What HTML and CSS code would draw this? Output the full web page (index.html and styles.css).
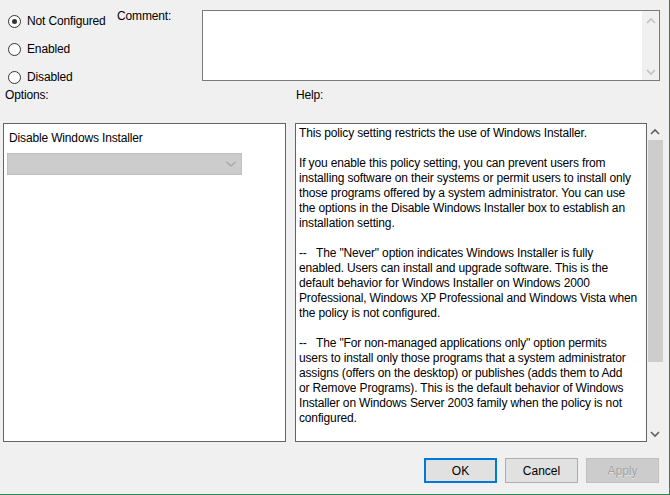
FILE: index.html
```html
<!DOCTYPE html>
<html>
<head>
<meta charset="utf-8">
<link rel="stylesheet" href="styles.css">
</head>
<body>
<div class="dialog">
  <div class="top">
    <div class="radios">
      <label class="radio"><span class="dot checked"></span>Not Configured</label>
      <label class="radio"><span class="dot"></span>Enabled</label>
      <label class="radio"><span class="dot"></span>Disabled</label>
    </div>
    <div class="comment-label">Comment:</div>
    <div class="comment-box">
      <div class="cscroll">
        <svg width="12" height="8" viewBox="0 0 12 8"><path d="M2 6 L6 2 L10 6" fill="none" stroke="#c2c2c2" stroke-width="1.6"/></svg>
        <svg width="12" height="8" viewBox="0 0 12 8"><path d="M2 2 L6 6 L10 2" fill="none" stroke="#c2c2c2" stroke-width="1.6"/></svg>
      </div>
    </div>
  </div>
  <div class="labels">
    <div class="lbl-options">Options:</div>
    <div class="lbl-help">Help:</div>
  </div>
  <div class="panels">
    <div class="options">
      <div class="opt-title">Disable Windows Installer</div>
      <div class="select">
        <svg width="12" height="8" viewBox="0 0 12 8"><path d="M1.5 2 L6 6 L10.5 2" fill="none" stroke="#a6a6a6" stroke-width="1.2"/></svg>
      </div>
    </div>
    <div class="help">
<div class="help-text">This policy setting restricts the use of Windows Installer.

If you enable this policy setting, you can prevent users from
installing software on their systems or permit users to install only
those programs offered by a system administrator. You can use
the options in the Disable Windows Installer box to establish an
installation setting.

--   The "Never" option indicates Windows Installer is fully
enabled. Users can install and upgrade software. This is the
default behavior for Windows Installer on Windows 2000
Professional, Windows XP Professional and Windows Vista when
the policy is not configured.

--   The "For non-managed applications only" option permits
users to install only those programs that a system administrator
assigns (offers on the desktop) or publishes (adds them to Add
or Remove Programs). This is the default behavior of Windows
Installer on Windows Server 2003 family when the policy is not
configured.</div>
    </div>
    <div class="hscroll">
      <svg width="12" height="8" viewBox="0 0 12 8"><path d="M2 6 L6 2 L10 6" fill="none" stroke="#606060" stroke-width="1.6"/></svg>
      <div class="thumb-track"><div class="thumb"></div></div>
      <svg width="12" height="8" viewBox="0 0 12 8"><path d="M2 2 L6 6 L10 2" fill="none" stroke="#606060" stroke-width="1.6"/></svg>
    </div>
  </div>
  <div class="buttons">
    <div class="btn default">OK</div>
    <div class="btn">Cancel</div>
    <div class="btn disabled">Apply</div>
  </div>
</div>
</body>
</html>
```
FILE: styles.css
```css
html, body {
  margin: 0;
  padding: 0;
  background: #f0f0f0;
}
.dialog {
  width: 669px;
  height: 494px;
  border-right: 1px solid #2a8a4f;
  border-bottom: 1px solid #2a8a4f;
  background: #f0f0f0;
  font-family: "Liberation Sans", Arial, sans-serif;
  font-size: 12px;
  letter-spacing: -0.15px;
  color: #000;
}
.top {
  display: flex;
  height: 88px;
}
.radios {
  width: 117px;
  padding-top: 14px;
  box-sizing: border-box;
  display: flex;
  flex-direction: column;
  gap: 14px;
}
.radio {
  display: flex;
  align-items: center;
  height: 14px;
  padding-left: 8px;
}
.dot {
  width: 11px;
  height: 11px;
  border: 1px solid #333;
  border-radius: 50%;
  background: #fff;
  margin-right: 6px;
  box-sizing: content-box;
  position: relative;
}
.dot.checked::after {
  content: "";
  position: absolute;
  left: 3px;
  top: 3px;
  width: 5px;
  height: 5px;
  border-radius: 50%;
  background: #333;
}
.comment-label {
  width: 85px;
  padding-top: 9px;
}
.comment-box {
  margin-top: 10px;
  width: 458px;
  height: 71px;
  box-sizing: border-box;
  border: 1px solid #7a7a7a;
  background: #fff;
  display: flex;
  justify-content: flex-end;
}
.cscroll {
  width: 17px;
  background: #f0f0f0;
  display: flex;
  flex-direction: column;
  justify-content: space-between;
  align-items: center;
  padding: 6px 0 4px;
}
.labels {
  display: flex;
  height: 15px;
}
.lbl-options {
  width: 296px;
  padding-left: 5px;
  box-sizing: border-box;
}
.panels {
  display: flex;
  margin-top: 20px;
  height: 319px;
  padding-left: 3px;
}
.options {
  width: 283px;
  box-sizing: border-box;
  border: 1px solid #646464;
  background: #fff;
  padding: 7px 0 0 3px;
}
.opt-title {
  padding-left: 2px;
  height: 15px;
  line-height: 15px;
}
.select {
  margin-top: 7px;
  width: 235px;
  height: 22px;
  box-sizing: border-box;
  background: #cccccc;
  border: 1px solid #bfbfbf;
  display: flex;
  justify-content: flex-end;
  align-items: center;
  padding-right: 4px;
}
.help {
  margin-left: 9px;
  width: 352px;
  box-sizing: border-box;
  border: 1px solid #646464;
  background: #fff;
  padding: 2px 0 0 3px;
  overflow: hidden;
}
.help-text {
  white-space: pre;
  line-height: 15px;
}
.hscroll {
  width: 16px;
  display: flex;
  flex-direction: column;
  align-items: center;
  padding-top: 5px;
  box-sizing: border-box;
}
.thumb-track {
  flex: 1;
  width: 100%;
  padding-top: 4px;
  box-sizing: border-box;
}
.thumb {
  margin-left: 1px;
  width: 15px;
  height: 222px;
  background: #cdcdcd;
}
.hscroll svg:last-child {
  margin-bottom: 4px;
}
.buttons {
  display: flex;
  justify-content: flex-end;
  gap: 8px;
  margin-top: 16px;
  padding-right: 10px;
}
.btn {
  width: 73px;
  height: 25px;
  box-sizing: border-box;
  border: 1px solid #adadad;
  background: #e1e1e1;
  display: flex;
  align-items: center;
  justify-content: center;
  letter-spacing: 0;
}
.btn.default {
  border: 2px solid #0078d7;
}
.btn.disabled {
  background: #cccccc;
  border-color: #bfbfbf;
  color: #a3a3a3;
  text-shadow: 0 1px 0 #e6e6e6;
}
```
